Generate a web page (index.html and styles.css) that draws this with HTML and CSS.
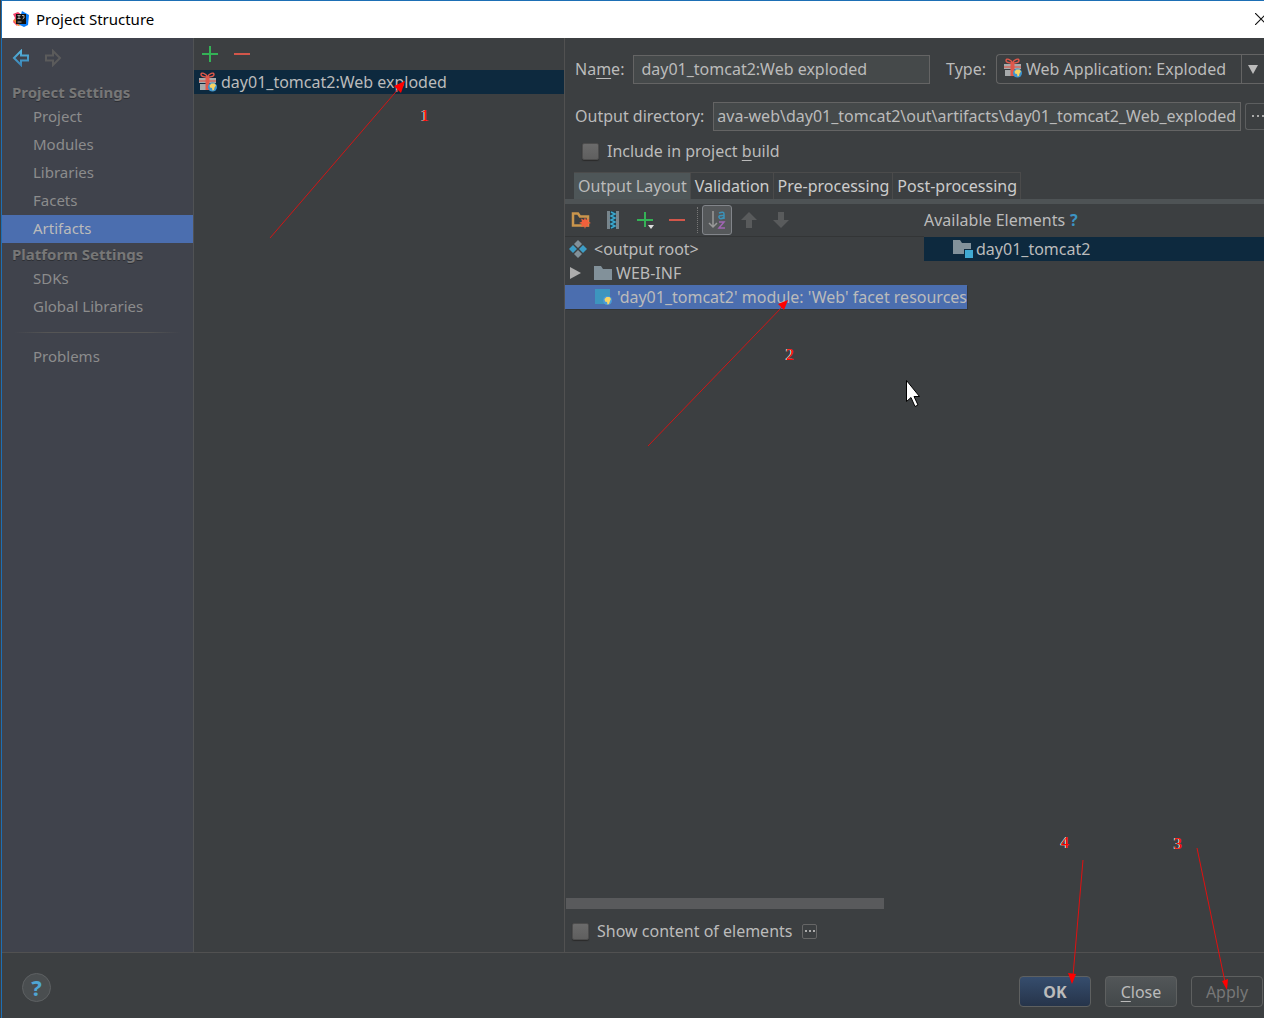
FILE: index.html
```html
<!DOCTYPE html>
<html lang="en">
<head>
<meta charset="utf-8">
<title>Project Structure</title>
<link rel="stylesheet" href="styles.css">
</head>
<body>
<svg class="defs" aria-hidden="true">
  <defs>
    <linearGradient id="blueFade" x1="0" y1="0" x2="0" y2="1"><stop offset="0" stop-color="#56b4dd"/><stop offset="1" stop-color="#3a86b8"/></linearGradient>
    <symbol id="gift" viewBox="0 0 20 20">
      <path d="M1 6h17v5H1zM2 12h15v6H2z" fill="#a7aaab"/>
      <path d="M7.500 5h4v13h-4z" fill="#e0584b"/>
      <path d="M1 9h17" stroke="#e0584b" stroke-width="1.200"/>
      <path d="M9.500 5C8 1 3 0 3 2.500c0 2 3 2.500 6.500 2.500zM9.500 5C11 1 16 0 16 2.500c0 2-3 2.500-6.500 2.500z" fill="none" stroke="#e0584b" stroke-width="1.400"/>
      <circle cx="14.500" cy="15" r="4.500" fill="#3d94d0"/>
      <path d="M11.500 13.500l2-2h3l1.500 2-1.500 2-.5 2.500-1.500.5-.5-2.500-2-.5z" fill="#f6d465"/>
    </symbol>
    <symbol id="plus" viewBox="0 0 16 16"><path d="M8 0v16M0 8h16" stroke="#34b256" stroke-width="2"/></symbol>
    <symbol id="minus" viewBox="0 0 16 16"><path d="M0 8h16" stroke="#d2564a" stroke-width="2"/></symbol>
    <symbol id="folder" viewBox="0 0 18 14"><path d="M0 0h7l2 3h9v11H0z" fill="#82919a"/></symbol>
  </defs>
</svg>
<div class="window">
  <header class="titlebar">
    <svg width="16" height="16" viewBox="0 0 16 16" aria-hidden="true">
      <path d="M0 3l5-2 4 3-5 11-4-4 2-4z" fill="#f0416b"/><path d="M0 9l5-1 4 6-4 1z" fill="#f58b35"/><path d="M9 0l7 4-1 10-4 2-6-3z" fill="#087cfa"/>
      <path d="M3 3h10v10H3z" fill="#111"/><path d="M4.500 4.500h3M6 4.500v3M4.500 7.500h3M9 4.500h2v2.500l-1.500 1M4.500 11h4" stroke="#aaa" fill="none"/>
    </svg>
    <h1>Project Structure</h1>
    <button class="close" aria-label="Close window"><svg width="12" height="12" viewBox="0 0 12 12"><path d="M0 0l12 12M12 0L0 12" stroke="#111" stroke-width="1.200"/></svg></button>
  </header>

  <div class="main">
    <nav class="sidebar">
      <div class="history">
        <button aria-label="Back"><svg width="18" height="18" viewBox="0 0 18 18"><path d="M2 9l7-7v4.500h7v5H9V16z" fill="none" stroke="url(#blueFade)" stroke-width="2"/></svg></button>
        <button aria-label="Forward"><svg width="18" height="18" viewBox="0 0 18 18"><path d="M16 9L9 2v4.500H2v5h7V16z" fill="none" stroke="#5b5b5b" stroke-width="2"/></svg></button>
      </div>
      <h2>Project Settings</h2>
      <a href="#">Project</a>
      <a href="#">Modules</a>
      <a href="#">Libraries</a>
      <a href="#">Facets</a>
      <a href="#" class="current">Artifacts</a>
      <h2>Platform Settings</h2>
      <a href="#">SDKs</a>
      <a href="#">Global Libraries</a>
      <hr>
      <a href="#">Problems</a>
    </nav>

    <section class="artifacts">
      <div class="list-tools">
        <button aria-label="Add artifact"><svg width="16" height="16"><use href="#plus"/></svg></button>
        <button aria-label="Remove artifact"><svg width="16" height="16"><use href="#minus"/></svg></button>
      </div>
      <div class="artifact"><svg width="20" height="20"><use href="#gift"/></svg><span>day01_tomcat2:Web exploded</span></div>
    </section>

    <section class="details">
      <div class="row name-row">
        <label for="name">Na<u>m</u>e:</label>
        <input id="name" class="field" type="text" value="day01_tomcat2:Web exploded">
        <label for="type" class="type-label">Type:</label>
        <div class="combo">
          <select id="type"><option>Web Application: Exploded</option></select>
          <svg class="combo-icon" width="20" height="20"><use href="#gift"/></svg>
          <span class="combo-arrow"><svg width="10" height="9" viewBox="0 0 10 9"><path d="M0 0h10L5 9z" fill="#bbb"/></svg></span>
        </div>
      </div>
      <div class="row dir-row">
        <label for="dir">Output directory:</label>
        <input id="dir" class="field path" type="text" value="ava-web\day01_tomcat2\out\artifacts\day01_tomcat2_Web_exploded">
        <button class="browse" aria-label="Browse"><svg width="12" height="2" viewBox="0 0 12 2"><path d="M0 0h2v2H0zM5 0h2v2H5zM10 0h2v2h-2z" fill="#aaa"/></svg></button>
      </div>
      <label class="check include"><input type="checkbox"><span>Include in project <u>b</u>uild</span></label>

      <div class="tabs" role="tablist">
        <button role="tab" aria-selected="true" class="active">Output Layout</button>
        <button role="tab">Validation</button>
        <button role="tab">Pre-processing</button>
        <button role="tab">Post-processing</button>
      </div>

      <div class="layout">
        <div class="output">
          <div class="tools">
            <button aria-label="Create directory"><svg width="20" height="18" viewBox="0 0 20 18"><path d="M2 14.500V2.500h5l2 3h8v9z" fill="none" stroke="#c9954c" stroke-width="2.500"/><path d="M14 6l1 3 3-1.500L17 10.500l3 1.500-3 1 1 3-3-1-1 3-1-3-3 1 1-3-3-1 3-1.500-1-3L13 9z" fill="#f0603c"/></svg></button>
            <button aria-label="Create archive"><svg width="12" height="18" viewBox="0 0 12 18"><path d="M0 0h12v18H0z" fill="#78858c"/><path d="M3 0h6v18H3z" fill="#263e4a"/><path d="M4 1l4 2-4 2 4 2-4 2 4 2-4 2 4 2-4 2" stroke="#3aa8cf" stroke-width="1.500" fill="none"/></svg></button>
            <button aria-label="Add copy of"><svg width="18" height="18" viewBox="0 0 18 18"><path d="M9 1v15M1 9h16" stroke="#34b256" stroke-width="2"/><path d="M12 14h6l-3 4z" fill="#ddd"/></svg></button>
            <button aria-label="Remove element"><svg width="16" height="16"><use href="#minus"/></svg></button>
            <button aria-label="Sort by name" class="sort"><svg width="18" height="20" viewBox="0 0 18 20"><path d="M5 1v16M1 13l4 4 4-4" stroke="#999" stroke-width="1.500" fill="none"/><path d="M11 3q5-2 5 1v5M16 5.500q-6-.5-5 2t5 0" stroke="#3b91b8" stroke-width="1.500" fill="none"/><path d="M11 12h5l-5 6h6" stroke="#a065b4" stroke-width="1.500" fill="none"/></svg></button>
            <button aria-label="Move up"><svg width="16" height="16" viewBox="0 0 16 16"><path d="M8 0l8 8h-5v8H5V8H0z" fill="#595b5c"/></svg></button>
            <button aria-label="Move down"><svg width="16" height="16" viewBox="0 0 16 16"><path d="M8 16l8-8h-5V0H5v8H0z" fill="#595b5c"/></svg></button>
          </div>
          <div class="tree">
            <div class="node"><svg width="18" height="18" viewBox="0 0 18 18"><path d="M9 0l4 4-4 4-4-4zM9 10l4 4-4 4-4-4z" fill="#82919a"/><path d="M4 5l4 4-4 4-4-4zM14 5l4 4-4 4-4-4z" fill="#3d9dc6"/></svg><span>&lt;output root&gt;</span></div>
            <div class="node folder"><svg width="11" height="12" viewBox="0 0 11 12"><path d="M0 0l11 6-11 6z" fill="#adadad"/></svg><svg width="18" height="14"><use href="#folder"/></svg><span>WEB-INF</span></div>
            <div class="node selected"><svg width="18" height="18" viewBox="0 0 18 18"><path d="M0 1h15v15H0z" fill="#3d95be"/><circle cx="12.500" cy="12.500" r="4.500" fill="#4a9bd8"/><path d="M9.500 11l2-2h3l1.500 2-1 2-1 3-1.500.5-.5-2.500-2-.5z" fill="#f6d465"/></svg><span>'day01_tomcat2' module: 'Web' facet resources</span></div>
          </div>
          <div class="scrollbar"></div>
        </div>
        <div class="available">
          <div class="available-head"><span>Available Elements</span><button aria-label="Help on elements" class="hint">?</button></div>
          <div class="element"><svg width="20" height="18" viewBox="0 0 20 18"><path d="M0 0h7l2 3h9v11H0z" fill="#82919a"/><path d="M11 9h9v9h-9z" fill="#0d293e"/><path d="M12 10h8v8h-8z" fill="#40a9d2"/></svg><span>day01_tomcat2</span></div>
        </div>
      </div>

      <div class="content-row">
        <label class="check"><input type="checkbox"><span>Show content of elements</span></label>
        <button class="more" aria-label="More options"><svg width="10" height="2" viewBox="0 0 10 2"><path d="M0 0h2v2H0zM4 0h2v2H4zM8 0h2v2H8z" fill="#aaa"/></svg></button>
      </div>
    </section>
  </div>

  <footer>
    <button class="help" aria-label="Help">?</button>
    <div class="actions">
      <button class="btn primary">OK</button>
      <button class="btn"><u>C</u>lose</button>
      <button class="btn" disabled>Apply</button>
    </div>
  </footer>

  <svg class="mark arrow-1" width="140" height="160" viewBox="0 0 140 160"><path d="M2 158L132 7" stroke="#d11515"/><path d="M137 1l-11 5 7 7z" fill="#f00"/></svg>
  <span class="mark num-1">1</span>
  <svg class="mark arrow-2" width="144" height="150" viewBox="0 0 144 150"><path d="M2 147L137 7" stroke="#d11515"/><path d="M142 1l-10 4 6 6z" fill="#f00"/></svg>
  <span class="mark num-2">2</span>
  <svg class="mark arrow-3" width="36" height="144" viewBox="0 0 36 144"><path d="M3 1l28 134" stroke="#e01010"/><path d="M33 143l-5-9 6-2z" fill="#f00"/></svg>
  <span class="mark num-3">3</span>
  <svg class="mark arrow-4" width="18" height="126" viewBox="0 0 18 126"><path d="M15 1L5 117" stroke="#e01010"/><path d="M4 125l-4-11 8 1z" fill="#f00"/></svg>
  <span class="mark num-4">4</span>
  <svg class="mark pointer" width="14" height="27" viewBox="0 0 14 27"><path d="M.5.5v21l4.500-4 4 9 3-1.500-4-8.500h5.500z" fill="#fff" stroke="#000"/></svg>
</div>
</body>
</html>
```

FILE: styles.css
```css
* { box-sizing: border-box; }
body {
  margin: 0;
  background: #3c3f41;
  color: #bbbbbb;
  font: 16px/24px "Noto Sans", "Open Sans", sans-serif;
  overflow: hidden;
}
button, input, select { font: inherit; color: inherit; }
button { margin: 0; padding: 0; border: 0; background: none; }
svg { display: block; flex: none; }
u { text-underline-offset: 3px; text-decoration-thickness: 1px; }
.defs { position: absolute; width: 0; height: 0; }

.window {
  position: relative;
  display: flex;
  flex-direction: column;
  height: 100vh;
  margin-left: 1px;
  border-left: 1px solid #1d6fb5;
  border-top: 1px solid #1d6fb5;
  overflow: hidden;
}
.titlebar {
  display: flex;
  align-items: center;
  gap: 7px;
  height: 37px;
  padding: 0 0 2px 11px;
  background: #fff;
  color: #000;
}
.titlebar h1 { flex: 1; margin: 0; font-size: 15px; font-weight: 400; }
.close { width: 9px; overflow: hidden; }

.main { display: flex; flex: 1; min-height: 0; }
.sidebar {
  width: 192px;
  flex: none;
  background: #40434c;
  border-right: 1px solid #505254;
  color: #8c8c8c;
}
.history { display: flex; align-items: flex-start; gap: 14px; height: 43px; padding: 11px 10px; }
.sidebar h2 {
  height: 22px;
  margin: 0;
  padding-left: 10px;
  font-size: 15px;
  line-height: 22px;
  color: #777777;
  text-shadow: 0 1px #2d2f34;
}
.sidebar a {
  display: block;
  height: 28px;
  padding-left: 31px;
  font-size: 15px;
  line-height: 27px;
  color: inherit;
  text-decoration: none;
}
.sidebar .current { background: #4b6eaf; color: #bbbbbb; }
.sidebar hr {
  height: 1px;
  margin: 11px 12px 10px;
  border: 0;
  background: linear-gradient(90deg, transparent, #555 20%, #555 80%, transparent);
}

.artifacts { width: 371px; flex: none; border-right: 1px solid #515151; }
.list-tools { display: flex; gap: 16px; height: 32px; padding: 8px; }
.artifact {
  display: flex;
  align-items: center;
  gap: 3px;
  height: 24px;
  padding-left: 4px;
  background: #0d293e;
}

.details { display: flex; flex: 1; flex-direction: column; min-width: 0; }
.row { display: flex; align-items: center; padding-left: 10px; }
.name-row { height: 30px; margin-top: 16px; }
.dir-row { height: 28px; margin-top: 18px; }
.field {
  flex: 1;
  min-width: 0;
  height: 29px;
  padding: 0 7px;
  border: 1px solid #646464;
  background: #45494a;
}
.path { padding: 0 2px 0 3px; }
.row label { flex: none; margin-right: 9px; }
.row .type-label { margin: 0 10px 0 16px; }
.combo { position: relative; width: 268px; height: 30px; }
.combo select {
  width: 100%;
  height: 30px;
  padding: 0 0 0 29px;
  border: 1px solid #646464;
  border-right: 0;
  border-radius: 4px 0 0 4px;
  appearance: none;
  background: #3c3f41;
}
.combo-icon { position: absolute; left: 7px; top: 4px; pointer-events: none; }
.combo-arrow {
  position: absolute;
  right: 0;
  top: 1px;
  display: grid;
  place-items: center;
  width: 23px;
  height: 28px;
  border-left: 1px solid #646464;
  pointer-events: none;
}
.browse {
  display: grid;
  place-items: center end;
  width: 19px;
  height: 27px;
  margin-left: 4px;
  border: 1px solid #5c5e5f;
  border-right: 0;
  border-radius: 3px 0 0 3px;
  overflow: hidden;
}
.check { display: flex; align-items: center; gap: 8px; }
.check input {
  width: 17px;
  height: 17px;
  margin: 0;
  border: 1px solid #4d4d4d;
  border-radius: 2px;
  appearance: none;
  background: linear-gradient(#6b6b6b, #5f5f5f);
  box-shadow: 0 1px 1px #2b2b2b;
}
.include { height: 24px; margin: 9px 0 0 17px; }

.tabs {
  display: flex;
  height: 32px;
  margin-top: 9px;
  padding-left: 9px;
  border-bottom: 5px solid #4e5355;
}
.tabs button {
  padding: 0 3px 0 4px;
  border: 1px solid #4b4b4b;
  border-width: 1px 1px 0 0;
  color: #cccccc;
}
.tabs .active { background: #4e5658; color: #bbbbbb; }

.layout { display: flex; flex: 1; min-height: 0; }
.output { display: flex; flex-direction: column; width: 359px; flex: none; }
.tools {
  display: flex;
  align-items: center;
  height: 33px;
  border-bottom: 1px solid #333536;
}
.tools button { display: grid; place-items: center; width: 32px; height: 30px; }
.tools .sort {
  position: relative;
  width: 30px;
  margin: 0 1px 0 9px;
  border: 1px solid #82858a;
  border-radius: 3px;
  background: #55585a;
}
.tools .sort::before {
  content: "";
  position: absolute;
  left: -6px;
  top: 1px;
  height: 26px;
  border-left: 1px dotted #777;
}
.tree { flex: 1; }
.node {
  display: flex;
  position: relative;
  align-items: center;
  gap: 7px;
  width: max-content;
  height: 24px;
  padding: 0 4px;
  white-space: nowrap;
}
.folder { gap: 4px; padding-left: 5px; }
.folder svg:first-child { margin-right: 9px; }
.selected { gap: 4px; padding: 0 0 0 30px; background: #4b6eaf; box-shadow: 1px 1px #333536; }
.scrollbar { width: 318px; height: 11px; margin-left: 1px; background: #595a5c; }
.available { flex: 1; min-width: 0; }
.available-head { display: flex; align-items: center; gap: 5px; height: 33px; padding-bottom: 1px; }
.hint { font-weight: 700; color: #3d94c4; }
.element {
  display: flex;
  align-items: center;
  gap: 3px;
  height: 24px;
  padding-left: 29px;
  background: #0d293e;
}
.content-row {
  display: flex;
  align-items: center;
  gap: 10px;
  height: 43px;
  padding: 1px 0 0 7px;
}
.more {
  display: grid;
  place-items: center;
  width: 15px;
  height: 15px;
  border: 1px solid #666;
  border-radius: 2px;
}

footer {
  display: flex;
  align-items: flex-start;
  justify-content: space-between;
  height: 66px;
  padding: 20px 1px 0 20px;
  border-top: 1px solid #515151;
}
.help {
  width: 29px;
  height: 29px;
  border: 1px solid #5e6163;
  border-radius: 50%;
  background: #4a4e50;
  color: #4fa5d3;
  font-size: 22px;
  font-weight: 700;
  line-height: 27px;
}
.actions { display: flex; gap: 14px; padding-top: 3px; }
.btn {
  width: 72px;
  height: 31px;
  border: 1px solid #5e6060;
  border-radius: 4px;
  background: linear-gradient(#525658, #43484a);
}
.primary { background: linear-gradient(#364d6d, #26344a); font-weight: 700; }
.btn:disabled { background: none; color: #777777; }

.mark {
  position: absolute;
  color: #f00;
  font: 16px/18px "Liberation Serif", serif;
  text-shadow: -1px 0 #eee;
  pointer-events: none;
}
.arrow-1 { left: 266px; top: 79px; }
.num-1 { left: 419px; top: 106px; }
.arrow-2 { left: 644px; top: 298px; }
.num-2 { left: 784px; top: 345px; }
.arrow-3 { right: 34px; bottom: 27px; }
.num-3 { right: 82px; bottom: 165px; }
.arrow-4 { right: 178px; bottom: 33px; }
.num-4 { right: 195px; bottom: 166px; }
.pointer { left: 904px; top: 379px; }
```
